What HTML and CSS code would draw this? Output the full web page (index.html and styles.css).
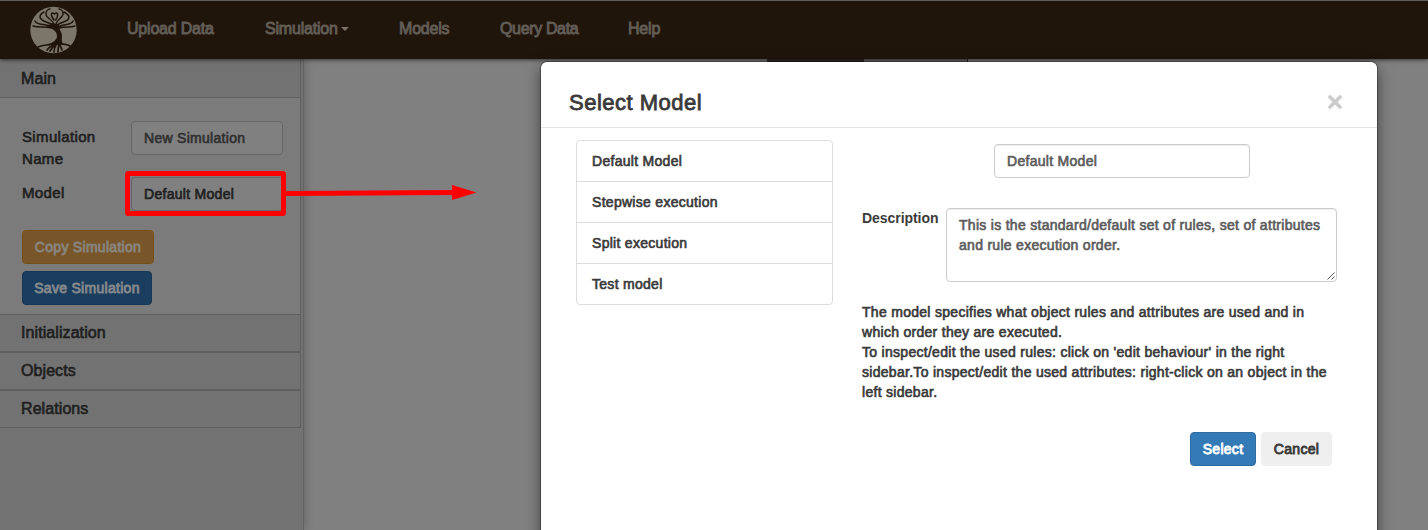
FILE: index.html
```html
<!DOCTYPE html>
<html lang="en">
<head>
<meta charset="utf-8">
<title>Select Model</title>
<link rel="stylesheet" href="styles.css">
</head>
<body>
<header class="navbar">
  <svg class="logo" width="48" height="48" viewBox="0 0 48 48" aria-hidden="true">
    <circle cx="24.500" cy="24" r="23.2" fill="#7c766a"/>
    <g fill="none" stroke="#20150b" stroke-linecap="round">
      <path d="M25 20C26 14 17 13 17 8C17 5 19 3 21 3M27 20C26 14 34 12 34 8C34 5 32 3 30 3M24 19C18 15 12 16 11 11C11 8 13 7 15 6M28 19C34 15 40 16 40 11C39 8 37 7 35 6M24 21C16 17 8 20 6 15M29 21C36 17 42 20 44 15M23 22C15 20 10 22 4 20M30 22C37 20 41 22 46 20M25 14C21 9 22 5 25.500 8C29 5 30 9 26.500 14" stroke-width="1.500"/>
      <path d="M27 36C22 40 16 38 9 41M28 37C24 40 20 40 18 44M28 37C26 41 25 42 25 46M30 37C31 40 32 41 33 44M30 37C35 39 38 38 41 40M27 39C23 41 22 43 21 45M30 38C29 42 29 43 29 46" stroke-width="1.700"/>
    </g>
    <path d="M17 20C23 22 28 25 28 30C28 34 24 36 19 39L35 39C32 36 33 33 33 30C33 25 29 23 30 19L24 17Z" fill="#20150b"/>
  </svg>
  <nav class="menu">
    <a class="item upload">Upload Data</a>
    <a class="item simulation">Simulation<i class="caret"></i></a>
    <a class="item models">Models</a>
    <a class="item query">Query Data</a>
    <a class="item help">Help</a>
  </nav>
</header>
<div class="workspace">
  <aside class="sidebar">
    <h3 class="section first">Main</h3>
    <div class="panel">
      <div class="row name-row"><label class="label">Simulation Name</label><div class="field muted">New Simulation</div></div>
      <div class="row"><label class="label">Model</label><div class="field">Default Model</div></div>
      <div class="actions">
        <button class="btn copy">Copy Simulation</button>
        <button class="btn save">Save Simulation</button>
      </div>
    </div>
    <h3 class="section">Initialization</h3>
    <h3 class="section">Objects</h3>
    <h3 class="section">Relations</h3>
  </aside>
  <main class="canvas"><div class="tabs"></div></main>
</div>
<svg class="annotation" width="360" height="60" viewBox="0 0 360 60" aria-hidden="true">
  <rect x="2.5" y="8.5" width="156" height="40" rx="1" fill="none" stroke="#f00" stroke-width="5"/>
  <path d="M160 28.5L328 27.5" stroke="#f00" stroke-width="5"/>
  <path d="M327 20L351.500 27.500L327 35Z" fill="#f00"/>
</svg>
<section class="modal">
  <div class="modal-head">
    <h2 class="title">Select Model</h2>
    <svg class="close" width="14" height="14" viewBox="0 0 14 14"><path d="M2 2L12 12M12 2L2 12" stroke="#ccc" stroke-width="3.700" stroke-linecap="round"/></svg>
  </div>
  <div class="modal-body">
    <ul class="list">
      <li>Default Model</li>
      <li>Stepwise execution</li>
      <li>Split execution</li>
      <li>Test model</li>
    </ul>
    <div class="details">
      <div class="model-name">Default Model</div>
      <div class="description">
        <label class="desc-label">Description</label>
        <div class="textarea">This is the standard/default set of rules, set of attributes<br>and rule execution order.
          <svg class="grip" width="8" height="8" viewBox="0 0 8 8"><path d="M0.500 7.500L7.500 0.500M4.500 7.500L7.500 4.500" stroke="#555" stroke-width="1"/></svg>
        </div>
      </div>
      <p class="info">The model specifies what object rules and attributes are used and in<br>which order they are executed.<br>To inspect/edit the used rules: click on 'edit behaviour' in the right<br>sidebar.To inspect/edit the used attributes: right-click on an object in the<br>left sidebar.</p>
      <div class="footer">
        <button class="btn select">Select</button>
        <button class="btn cancel">Cancel</button>
      </div>
    </div>
  </div>
</section>
</body>
</html>
```
FILE: styles.css
```css
* { box-sizing: border-box; }
body {
  margin: 0; width: 1428px; height: 530px; overflow: hidden; position: relative;
  font: 14px/20px "Liberation Sans", Arial, sans-serif;
  letter-spacing: .29px; -webkit-text-stroke: .65px currentColor;
  color: #3a3a3a; background: #808080;
  white-space: nowrap;
}
h2, h3, p, ul { margin: 0; padding: 0; font-weight: normal; }
.navbar {
  position: relative; display: flex; height: 59px; background: #20150b;
  border-top: 1px solid #625f5b; padding-left: 29px; box-shadow: 0 1px 4px rgba(0,0,0,.6);
}
.logo { margin-top: 5px; flex: none; }
.menu { display: flex; padding: 18px 0 0 50px; font-size: 16px; letter-spacing: -.2px; -webkit-text-stroke-width: .9px; color: #625d55; }
.item { flex: none; }
.upload { width: 138px; } .simulation { width: 134px; } .models { width: 101px; } .query { width: 128px; letter-spacing: -.35px; }
.caret { display: inline-block; margin-left: 3px; vertical-align: 3px; border: 4px solid transparent; border-top-color: #777168; border-bottom: 0; }
.workspace { display: flex; height: 471px; }
.sidebar { width: 304px; background: #727272; border-right: 1px solid #636363; box-shadow: 2px 0 8px rgba(0,0,0,.18); }
.section { width: 301px; height: 38px; padding: 8px 21px; font-size: 16px; line-height: 20px; letter-spacing: .08px; color: #1f1f1f; border: solid #5f5f5f; border-width: 1px 1px 1px 0; }
.first { height: 39px; padding-top: 10px; border-top: 0; }
.panel { width: 301px; height: 216px; padding: 23px 17px 0 22px; background: #7b7b7b; border-right: 1px solid #5f5f5f; color: #1f1f1f; }
.row { display: flex; justify-content: space-between; height: 34px; }
.name-row { height: 56px; }
.label { width: 90px; padding-top: 5px; font-size: 15px; line-height: 22px; white-space: normal; letter-spacing: .35px; }
.field { width: 152px; height: 34px; padding: 6px 12px; background: #808080; border: 1px solid #676767; border-radius: 4px; }
.muted { color: #303030; }
.actions { display: flex; flex-direction: column; align-items: flex-start; gap: 7px; padding-top: 19px; }
.btn { height: 34px; padding: 0; font: inherit; letter-spacing: inherit; border: 1px solid; border-radius: 4px; -webkit-text-stroke-width: .85px; }
.copy { width: 132px; color: #88847e; background: #785629; border-color: #775019; }
.save { width: 130px; color: #84888c; background: #1b3e5e; border-color: #173756; }
.canvas { flex: 1; padding-left: 463px; }
.tabs { width: 201px; height: 4px; background: linear-gradient(90deg, #322e2b 97px, #6a6a6a 97px 200px, #292929 200px); }
.annotation { position: absolute; left: 125px; top: 165px; }
.modal { position: absolute; left: 541px; top: 62px; width: 836px; height: 480px; background: #fff; border-radius: 6px 6px 0 0; box-shadow: 0 0 0 1px rgba(0,0,0,.3), 0 5px 15px rgba(0,0,0,.5); }
.modal-head { display: flex; justify-content: space-between; height: 66px; padding: 27px 35px 0 28px; border-bottom: 1px solid #e5e5e5; }
.title { font-size: 22px; line-height: 27px; letter-spacing: .5px; -webkit-text-stroke-width: .8px; }
.close { margin-top: 6px; }
.modal-body { display: flex; padding: 12px 40px 0 35px; gap: 29px; }
.list { flex: none; width: 257px; height: 165px; list-style: none; border: 1px solid #ddd; border-radius: 4px; }
.list li { height: 41px; padding: 10px 15px; border-bottom: 1px solid #ddd; }
.list li:last-child { border-bottom: 0; }
.details { width: 475px; padding-top: 4px; }
.model-name { width: 256px; height: 34px; margin-left: 132px; padding: 6px 12px; color: #5c5c5c; border: 1px solid #ccc; border-radius: 4px; box-shadow: inset 0 1px 1px rgba(0,0,0,.075); }
.description { display: flex; justify-content: space-between; margin-top: 30px; }
.desc-label { font-weight: bold; letter-spacing: -.05px; -webkit-text-stroke-width: 0; }
.textarea { position: relative; width: 391px; height: 74px; padding: 6px 12px; color: #5c5c5c; border: 1px solid #ccc; border-radius: 4px; box-shadow: inset 0 1px 1px rgba(0,0,0,.075); }
.grip { position: absolute; right: 1px; bottom: 1px; }
.info { margin-top: 20px; }
.footer { display: flex; justify-content: flex-end; gap: 5px; padding: 30px 5px 0 0; }
.select { width: 66px; color: #fff; background: #337ab7; border-color: #2e6da4; }
.cancel { width: 71px; background: #efefef; border-color: #efefef; color: #3a3a3a; }
```
